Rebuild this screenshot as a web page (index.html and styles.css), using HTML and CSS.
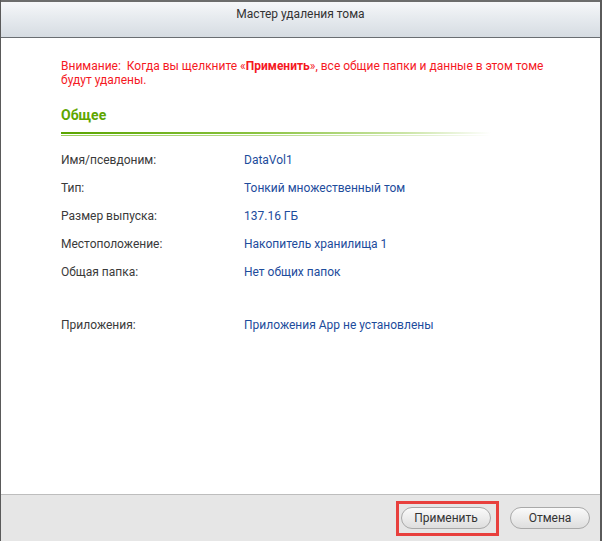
FILE: index.html
```html
<!DOCTYPE html>
<html lang="ru">
<head>
<meta charset="utf-8">
<title>Мастер удаления тома</title>
<link rel="stylesheet" href="styles.css">
</head>
<body>
<div class="window">
  <div class="titlebar">Мастер удаления тома</div>
  <div class="content">
    <p class="warning">Внимание:&nbsp; Когда вы щелкните «<b>Применить</b>», все общие папки и данные в этом томе будут удалены.</p>
    <h2 class="section-title">Общее</h2>
    <div class="section-rule"></div>
    <div class="rows">
      <div class="row"><span class="label">Имя/псевдоним:</span><span class="value">DataVol1</span></div>
      <div class="row"><span class="label">Тип:</span><span class="value">Тонкий множественный том</span></div>
      <div class="row"><span class="label">Размер выпуска:</span><span class="value">137.16 ГБ</span></div>
      <div class="row"><span class="label">Местоположение:</span><span class="value">Накопитель хранилища 1</span></div>
      <div class="row"><span class="label">Общая папка:</span><span class="value">Нет общих папок</span></div>
      <div class="row row-apps"><span class="label">Приложения:</span><span class="value">Приложения App не установлены</span></div>
    </div>
  </div>
  <div class="footer">
    <div class="btn-wrap highlighted"><button class="btn btn-apply">Применить</button></div>
    <button class="btn btn-cancel">Отмена</button>
  </div>
</div>
</body>
</html>
```

FILE: styles.css
```css
html, body {
  margin: 0;
  padding: 0;
  background: #ffffff;
}
body {
  width: 602px;
  height: 541px;
  overflow: hidden;
  font-family: Roboto, "Liberation Sans", Arial, sans-serif;
  font-size: 12px;
  color: #333;
}
.window {
  box-sizing: border-box;
  width: 602px;
  height: 541px;
  display: flex;
  flex-direction: column;
  border-left: 1px solid #5a5a5a;
  border-right: 2px solid #5a5a5a;
  background: #fff;
}
.titlebar {
  flex: 0 0 auto;
  box-sizing: border-box;
  height: 38px;
  border-top: 2px solid #6c6c6c;
  border-bottom: 1px solid #6a6e72;
  background: linear-gradient(to bottom, #f6f7f9 0%, #e8ecf0 40%, #d6dce2 100%);
  text-align: center;
  line-height: 14px;
  padding-top: 5px;
  color: #333;
  font-size: 12px;
}
.content {
  flex: 1 1 auto;
  padding: 21px 0 0 60px;
}
.warning {
  margin: 0;
  width: 500px;
  color: #f5191f;
  line-height: 14px;
}
.warning b {
  font-weight: 700;
}
.section-title {
  margin: 19px 0 0 0;
  font-size: 14px;
  line-height: 18px;
  font-weight: 700;
  color: #5ea600;
}
.section-rule {
  margin-top: 8px;
  width: 430px;
  height: 4px;
  background:
    linear-gradient(to right, #5aa500 0%, #8ac340 45%, #cbe5a6 80%, rgba(255,255,255,0) 100%) top / 100% 2px no-repeat,
    linear-gradient(to right, #9bcf5c 0%, #b8dc8c 50%, #e2f0cf 85%, rgba(255,255,255,0) 100%) bottom / 100% 1px no-repeat;
}
.rows {
  margin-top: 10px;
}
.row {
  display: grid;
  grid-template-columns: 183px auto;
  line-height: 28px;
  height: 28px;
}
.row-apps {
  margin-top: 25px;
}
.label {
  color: #3a3a3a;
}
.value {
  color: #1d4c9c;
}
.footer {
  flex: 0 0 auto;
  box-sizing: border-box;
  height: 47px;
  border-top: 1px solid #bdbdbd;
  background: #e6e6e6;
  display: flex;
  justify-content: flex-end;
  align-items: center;
  gap: 19px;
  padding: 0 10px 0 0;
}
.btn {
  box-sizing: border-box;
  height: 22px;
  border: 1px solid #a9a9a9;
  border-radius: 11px;
  background: linear-gradient(to bottom, #fafafa 0%, #ececec 50%, #dedede 100%);
  font-family: Roboto, "Liberation Sans", Arial, sans-serif;
  font-size: 12px;
  color: #333;
  padding: 0;
  margin: 0;
  line-height: 20px;
}
.btn-apply {
  width: 90px;
}
.btn-cancel {
  width: 80px;
}
.btn-wrap {
  position: relative;
  display: flex;
}
.highlighted::after {
  content: "";
  position: absolute;
  left: -5px;
  top: -6px;
  width: 103px;
  height: 35px;
  box-sizing: border-box;
  border: 3px solid #e8403d;
}
```
